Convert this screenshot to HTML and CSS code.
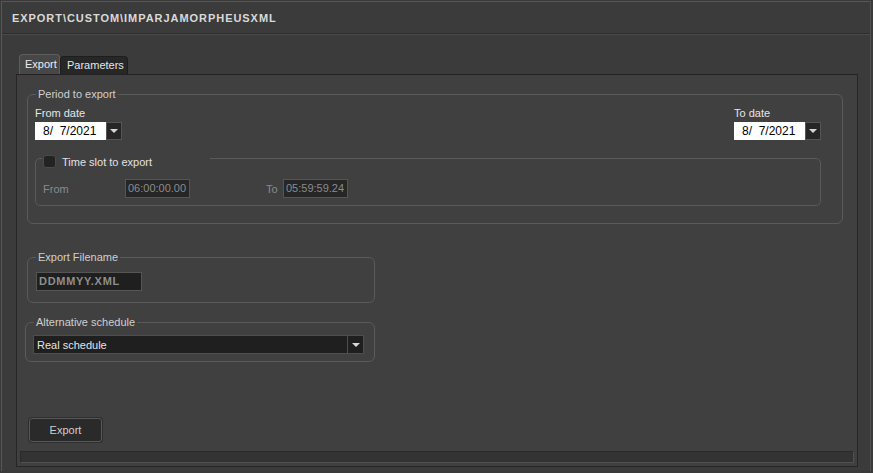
FILE: index.html
```html
<!DOCTYPE html>
<html>
<head>
<meta charset="utf-8">
<link rel="stylesheet" href="styles.css">
</head>
<body>
<div class="window">
  <div class="titlebar">EXPORT\CUSTOM\IMPARJAMORPHEUSXML</div>
  <div class="tabs">
    <div class="tab active">Export</div>
    <div class="tab">Parameters</div>
  </div>
  <div class="panel">
    <div class="group period">
      <div class="legend">Period to export</div>
      <div class="date-row">
        <div class="date-block">
          <div class="label">From date</div>
          <div class="picker">
            <div class="date-input">8/&nbsp; 7/2021</div>
            <div class="drop"><span class="tri"></span></div>
          </div>
        </div>
        <div class="date-block">
          <div class="label">To date</div>
          <div class="picker">
            <div class="date-input">8/&nbsp; 7/2021</div>
            <div class="drop"><span class="tri"></span></div>
          </div>
        </div>
      </div>
      <div class="group timeslot">
        <div class="legend check-legend">
          <span class="checkbox"></span>
          <span class="check-label">Time slot to export</span>
        </div>
        <div class="time-row">
          <span class="dim-label from-label">From</span>
          <div class="time-input">06:00:00.00</div>
          <span class="dim-label to-label">To</span>
          <div class="time-input">05:59:59.24</div>
        </div>
      </div>
    </div>

    <div class="group filename">
      <div class="legend">Export Filename</div>
      <div class="file-input">DDMMYY.XML</div>
    </div>

    <div class="group schedule">
      <div class="legend">Alternative schedule</div>
      <div class="select">
        <span class="select-text">Real schedule</span>
        <div class="select-drop"><span class="tri"></span></div>
      </div>
    </div>

    <button class="export-btn">Export</button>

    <div class="progress"></div>
  </div>
</div>
</body>
</html>
```

FILE: styles.css
```css
* { box-sizing: border-box; }
html, body {
  margin: 0;
  padding: 0;
  background: #3a3a3a;
  width: 873px;
  height: 473px;
  overflow: hidden;
  font-family: "Liberation Sans", Arial, sans-serif;
  font-size: 11px;
  color: #e2e2e2;
}
.window {
  margin: 1px 2px 0 1px;
  height: 470px;
  border-top: 1px solid #575757;
  border-left: 1px solid #575757;
  border-right: 1px solid #505050;
  background: #3b3b3b;
}
.titlebar {
  height: 32px;
  border-bottom: 1px solid #2c2c2c;
  box-shadow: 0 1px 0 #4a4a4a;
  padding-left: 10px;
  line-height: 32px;
  font-weight: bold;
  font-size: 11px;
  letter-spacing: 0.95px;
  color: #d9d9d9;
}
.tabs {
  display: flex;
  align-items: flex-end;
  margin: 20px 0 0 17px;
  height: 20px;
}
.tab {
  height: 18px;
  padding: 0 3px 0 6px;
  line-height: 17px;
  background: #272727;
  border: 1px solid #1e1e1e;
  border-bottom: none;
  border-radius: 4px 4px 0 0;
  color: #e6e6e6;
  font-size: 11px;
}
.tab.active {
  height: 20px;
  width: 41px;
  padding: 0 0 0 5px;
  line-height: 19px;
  background: #474747;
  border: 1px solid #5e5e5e;
  border-bottom: none;
  color: #ececec;
}
.panel {
  margin-left: 14px;
  width: 842px;
  height: 393px;
  border: 1px solid #262626;
  border-top-color: #222;
  background: #404040;
  padding-left: 10px;
}
.group {
  border: 1px solid #5a5a5a;
  border-radius: 6px;
}
.legend {
  width: max-content;
  height: 14px;
  margin-top: -8px;
  padding: 0 2px;
  line-height: 14px;
  background: #404040;
  color: #cfcfcf;
}
.period {
  margin-top: 19px;
  width: 816px;
  height: 130px;
  padding: 0 21px 0 7px;
}
.period > .legend { margin-left: 1px; }
.date-row {
  display: flex;
  justify-content: space-between;
  margin-top: 5px;
}
.label {
  height: 14px;
  line-height: 14px;
  color: #e6e6e6;
}
.picker {
  display: flex;
  margin-top: 2px;
}
.date-input {
  width: 71px;
  height: 18px;
  background: #ffffff;
  color: #000;
  font-size: 12px;
  line-height: 18px;
  padding-left: 8px;
}
.drop {
  width: 16px;
  height: 18px;
  background: #262626;
  border: 1px solid #555;
  display: flex;
  align-items: center;
  justify-content: center;
}
.tri {
  width: 0;
  height: 0;
  border-left: 4px solid transparent;
  border-right: 4px solid transparent;
  border-top: 4px solid #d8d8d8;
}
.timeslot {
  margin-top: 18px;
  height: 48px;
  border-radius: 5px;
  padding-left: 6px;
}
.check-legend {
  margin-top: -5px;
  height: 15px;
  width: 168px;
  display: flex;
  align-items: center;
  padding: 0 0 0 1px;
}
.checkbox {
  width: 13px;
  height: 13px;
  border-radius: 3px;
  background: #232323;
  border: 1px solid #4a4a4a;
}
.check-label {
  margin-left: 6px;
  color: #e2e2e2;
}
.time-row {
  display: flex;
  align-items: center;
  margin-top: 10px;
  height: 19px;
}
.dim-label { color: #8a8a8a; }
.from-label { margin-left: 1px; width: 82px; }
.to-label { margin-left: 76px; width: 17px; }
.time-input {
  width: 65px;
  height: 19px;
  background: #262626;
  border: 1px solid #555;
  color: #8c8c8c;
  font-size: 11px;
  line-height: 17px;
  padding-left: 2px;
}
.filename {
  margin-top: 33px;
  width: 348px;
  height: 46px;
  padding-left: 8px;
}
.filename .legend { margin-left: 0; }
.file-input {
  margin-top: 8px;
  width: 106px;
  height: 19px;
  background: #1f1f1f;
  border: 1px solid #555;
  color: #8e8e8e;
  font-weight: bold;
  font-size: 11px;
  letter-spacing: 0.7px;
  line-height: 17px;
  padding-left: 2px;
}
.schedule {
  margin-top: 19px;
  margin-left: -2px;
  width: 350px;
  height: 40px;
  padding-left: 7px;
}
.schedule .legend { margin-left: 1px; }
.select {
  margin-top: 6px;
  margin-left: 0;
  width: 331px;
  height: 19px;
  background: #1f1f1f;
  border: 1px solid #4e4e4e;
  display: flex;
  align-items: center;
  justify-content: space-between;
}
.select-text {
  padding-left: 3px;
  color: #e4e4e4;
  font-size: 11px;
}
.select-drop {
  width: 16px;
  height: 17px;
  border-left: 1px solid #4e4e4e;
  display: flex;
  align-items: center;
  justify-content: center;
}
.export-btn {
  display: block;
  margin: 56px 0 0 2px;
  width: 73px;
  height: 24px;
  background: #2a2a2a;
  border: 1px solid #585858;
  border-radius: 3px;
  box-shadow: 0 0 0 1px #2e2e2e;
  color: #cfcfcf;
  font-family: "Liberation Sans", Arial, sans-serif;
  font-size: 11px;
  padding: 0;
}
.progress {
  margin: 9px 0 0 -7px;
  width: 834px;
  height: 12px;
  background: #333333;
  border: 1px solid #2a2a2a;
  border-bottom-color: #505050;
  border-right-color: #505050;
}
```
